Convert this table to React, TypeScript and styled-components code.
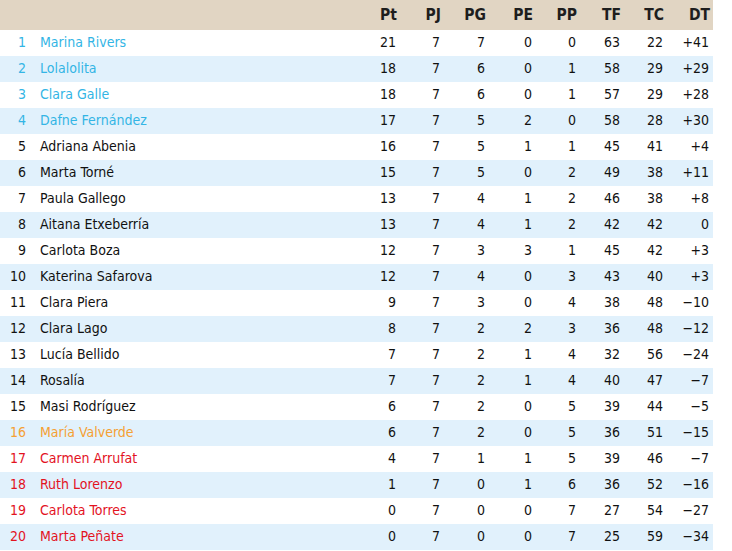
import styled, { createGlobalStyle } from 'styled-components'

const GlobalStyle = createGlobalStyle`
  html, body {
    margin: 0;
    padding: 0;
    background: #ffffff;
  }
  body {
    font-family: 'DejaVu Sans Condensed', 'DejaVu Sans', Tahoma, sans-serif;
    font-stretch: condensed;
  }
`

type Zone = 'top' | 'mid' | 'low' | 'out'

const zoneColor: Record<Zone, string> = {
  top: '#33b5e5',
  mid: '#111111',
  low: '#f5a033',
  out: '#e3131f',
}

const COLS = '30px 325px 45px 44px 45px 47px 44px 44px 43px 46px'

const Table = styled.div`
  width: 713px;
  display: flex;
  flex-direction: column;
`

const HeadRow = styled.div`
  display: grid;
  grid-template-columns: ${COLS};
  height: 30px;
  align-items: end;
  background: #e1d5c3;
  color: #1e1e1e;
`

const HeadCell = styled.div`
  text-align: right;
  padding: 0 3px 6px 0;
  font-size: 15.5px;
  font-weight: 700;
  line-height: 18px;
`

const Row = styled.div<{ $alt: boolean; $zone: Zone }>`
  display: grid;
  grid-template-columns: ${COLS};
  height: 26px;
  padding-bottom: 2px;
  box-sizing: border-box;
  align-items: center;
  background: ${(p) => (p.$alt ? '#e1f1fc' : '#ffffff')};
  color: ${(p) => zoneColor[p.$zone]};
  font-size: 14px;
  line-height: 16px;
`

const Rank = styled.div`
  text-align: right;
  padding-right: 4px;
`

const Name = styled.div`
  padding-left: 10px;
  white-space: nowrap;
`

const Stat = styled.div`
  text-align: right;
  padding-right: 4px;
  color: #111111;
`

const heads = ['Pt', 'PJ', 'PG', 'PE', 'PP', 'TF', 'TC', 'DT']

const rows: [string, number, number, number, number, number, number, number, string][] = [
  ['Marina Rivers', 21, 7, 7, 0, 0, 63, 22, '+41'],
  ['Lolalolita', 18, 7, 6, 0, 1, 58, 29, '+29'],
  ['Clara Galle', 18, 7, 6, 0, 1, 57, 29, '+28'],
  ['Dafne Fernández', 17, 7, 5, 2, 0, 58, 28, '+30'],
  ['Adriana Abenia', 16, 7, 5, 1, 1, 45, 41, '+4'],
  ['Marta Torné', 15, 7, 5, 0, 2, 49, 38, '+11'],
  ['Paula Gallego', 13, 7, 4, 1, 2, 46, 38, '+8'],
  ['Aitana Etxeberría', 13, 7, 4, 1, 2, 42, 42, '0'],
  ['Carlota Boza', 12, 7, 3, 3, 1, 45, 42, '+3'],
  ['Katerina Safarova', 12, 7, 4, 0, 3, 43, 40, '+3'],
  ['Clara Piera', 9, 7, 3, 0, 4, 38, 48, '−10'],
  ['Clara Lago', 8, 7, 2, 2, 3, 36, 48, '−12'],
  ['Lucía Bellido', 7, 7, 2, 1, 4, 32, 56, '−24'],
  ['Rosalía', 7, 7, 2, 1, 4, 40, 47, '−7'],
  ['Masi Rodríguez', 6, 7, 2, 0, 5, 39, 44, '−5'],
  ['María Valverde', 6, 7, 2, 0, 5, 36, 51, '−15'],
  ['Carmen Arrufat', 4, 7, 1, 1, 5, 39, 46, '−7'],
  ['Ruth Lorenzo', 1, 7, 0, 1, 6, 36, 52, '−16'],
  ['Carlota Torres', 0, 7, 0, 0, 7, 27, 54, '−27'],
  ['Marta Peñate', 0, 7, 0, 0, 7, 25, 59, '−34'],
]

const zoneOf = (pos: number): Zone => {
  if (pos <= 4) return 'top'
  if (pos === 16) return 'low'
  if (pos >= 17) return 'out'
  return 'mid'
}

export default function App() {
  return (
    <>
      <GlobalStyle />
      <Table>
        <HeadRow>
          <div />
          <div />
          {heads.map((h) => (
            <HeadCell key={h}>{h}</HeadCell>
          ))}
        </HeadRow>
        {rows.map(([name, ...stats], i) => (
          <Row key={name} $alt={i % 2 === 1} $zone={zoneOf(i + 1)}>
            <Rank>{i + 1}</Rank>
            <Name>{name}</Name>
            {stats.map((s, j) => (
              <Stat key={j}>{s}</Stat>
            ))}
          </Row>
        ))}
      </Table>
    </>
  )
}
